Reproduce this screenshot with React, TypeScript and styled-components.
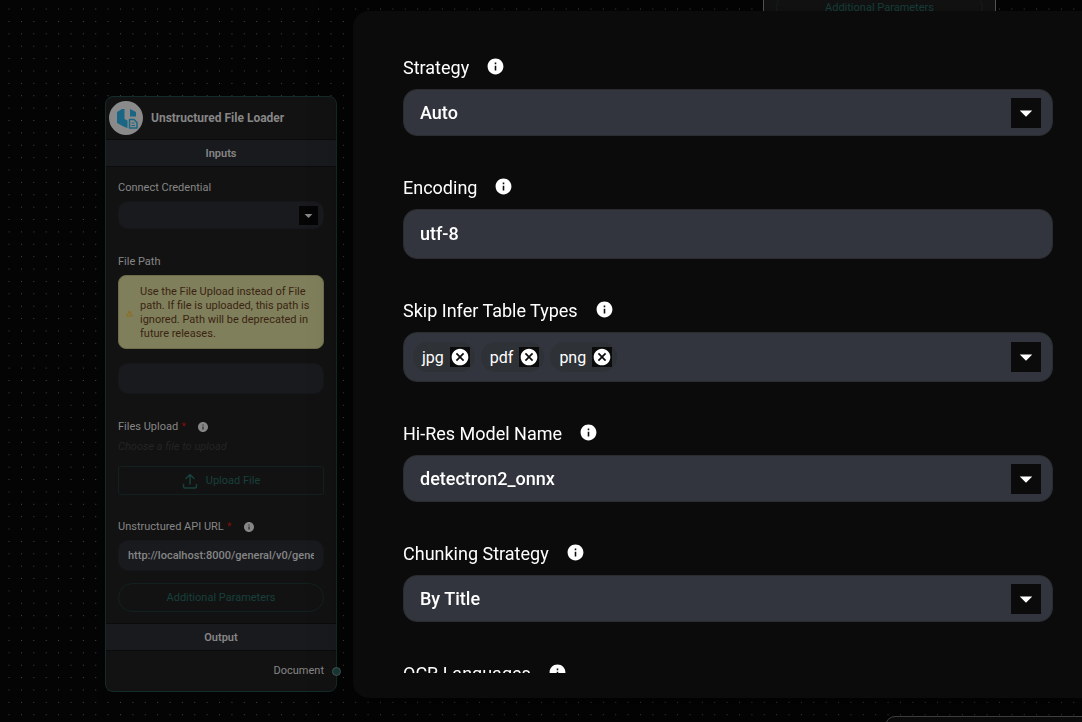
import React from 'react';
import styled, { createGlobalStyle } from 'styled-components';

const Global = createGlobalStyle`
  * { box-sizing: border-box; }
  html, body, #root { height: 100%; }
  body {
    margin: 0;
    background: #040404;
    font-family: Roboto, "Liberation Sans", sans-serif;
    overflow: hidden;
  }
  button, input, select { font-family: inherit; margin: 0; }
`;

const Canvas = styled.main`
  position: relative;
  min-height: 100vh;
  overflow: hidden;
`;

const DotGrid = styled.svg`
  position: absolute;
  inset: 0;
  width: 100%;
  height: 100%;
`;

const Node = styled.article<{ $x: number; $y: number; $idle?: boolean }>`
  position: absolute;
  left: ${p => p.$x}px;
  top: ${p => p.$y}px;
  width: ${p => (p.$idle ? 233 : 232)}px;
  background: #121212;
  border: 1px solid ${p => (p.$idle ? '#565656' : '#132b29')};
  border-radius: 8px;
  color: #868686;
  font-size: 11px;
  line-height: 14px;
`;

const NodeHeader = styled.header`
  display: flex;
  align-items: center;
  gap: 8px;
  height: 42px;
  padding: 0 3px;
`;

const NodeTitle = styled.h2`
  margin: 0;
  font-size: 12px;
  line-height: 16px;
  font-weight: 700;
`;

const SectionBar = styled.h3`
  margin: 0;
  height: 28px;
  border: solid #0b0b0b;
  border-width: 1px 0;
  background: #191a1e;
  font-size: 11px;
  line-height: 27px;
  font-weight: 600;
  text-align: center;
`;

const NodeBody = styled.div`
  display: flex;
  flex-direction: column;
  padding: 14px 12px 11px;
`;

const NodeLabel = styled.label`
  display: flex;
  align-items: center;
  height: 14px;
  margin-bottom: 6px;
  svg { margin-left: 11px; }
`;

const Required = styled.span`
  margin-left: 3px;
  color: #7c0d0d;
`;

const SmallField = styled.div`
  display: grid;
  align-items: center;
  height: 28px;
  > * { grid-area: 1 / 1; }
`;

const SmallSelect = styled.select`
  appearance: none;
  width: 100%;
  height: 28px;
  border: 1px solid #16171a;
  border-radius: 10px;
  background: #191a1e;
  color: #868686;
`;

const SmallInput = styled.input`
  display: block;
  width: 100%;
  height: 31px;
  padding: 0 9px;
  border: 1px solid #16171a;
  border-radius: 10px;
  background: #191a1e;
  color: #868686;
  font-size: 11px;
  font-weight: 500;
`;

const Arrow = styled.span<{ $small?: boolean }>`
  display: flex;
  align-items: center;
  justify-content: center;
  justify-self: end;
  flex: none;
  width: ${p => (p.$small ? 19 : 30)}px;
  height: ${p => (p.$small ? 19 : 30)}px;
  margin-right: ${p => (p.$small ? 6 : 12)}px;
  background: ${p => (p.$small ? '#050505' : '#0b0b0b')};
  color: ${p => (p.$small ? '#868686' : '#fff')};
  pointer-events: none;
`;

const Group = styled.div<{ $gap: number }>`
  margin-bottom: ${p => p.$gap}px;
`;

const Warning = styled.p`
  display: flex;
  align-items: center;
  gap: 7px;
  margin: 0 0 14px;
  padding: 9px 12px 7px 7px;
  border: 1px solid #6c6c4a;
  border-radius: 8px;
  background: #7f7f5b;
  color: #3b2412;
  svg { flex: none; }
`;

const Hint = styled.p`
  margin: 0 0 12px;
  color: #242424;
  font-style: italic;
`;

const OutlineButton = styled.button<{ $pill?: boolean }>`
  display: flex;
  align-items: center;
  justify-content: center;
  gap: 8px;
  width: 100%;
  height: 29px;
  padding: 0;
  border: 1px solid #122120;
  border-radius: ${p => (p.$pill ? 15 : 3)}px;
  background: transparent;
  color: #17403b;
  font-size: 11px;
`;

const Output = styled.footer`
  display: flex;
  align-items: center;
  justify-content: flex-end;
  height: 40px;
  padding-right: 12px;
`;

const Handle = styled.span`
  position: absolute;
  right: -5px;
  bottom: 15px;
  width: 9px;
  height: 9px;
  border: 1px solid #4a5553;
  border-radius: 50%;
  background: #173a36;
`;

const ChatPanel = styled.div`
  position: absolute;
  left: 885px;
  right: -20px;
  top: 716px;
  height: 60px;
  padding: 4px 12px;
  border: 1px solid #484848;
  border-radius: 10px;
  background: #0c0c0c;
  color: #777;
`;

const Overlay = styled.div`
  position: fixed;
  inset: 0;
  display: flex;
  padding: 11px 0 24px 353px;
`;

const Dialog = styled.section`
  flex: 1;
  min-width: 0;
  padding: 45px 29px 25px 50px;
  border-radius: 16px 0 0 16px;
  background: #0b0b0b;
  color: #fff;
  box-shadow: 0 11px 15px -7px rgba(0, 0, 0, 0.2), 0 24px 38px 3px rgba(0, 0, 0, 0.14),
    0 9px 46px 8px rgba(0, 0, 0, 0.12);
`;

const Form = styled.form`
  display: flex;
  flex-direction: column;
  gap: 40px;
  height: 100%;
  overflow: hidden;
`;

const FieldGroup = styled.div`
  flex: none;
`;

const LabelRow = styled.div`
  display: flex;
  align-items: center;
  gap: 17px;
  height: 24px;
  margin-bottom: 9px;
  font-size: 18px;
  line-height: 24px;
  svg { margin-bottom: 4px; }
`;

const SelectShell = styled.div`
  display: grid;
  align-items: center;
  > * { grid-area: 1 / 1; }
`;

const Select = styled.select`
  appearance: none;
  width: 100%;
  height: 47px;
  padding: 0 56px 0 16px;
  border: 1px solid #2b2c30;
  border-radius: 14px;
  background: #32353d;
  color: #fff;
  font-size: 18px;
  font-weight: 500;
`;

const TextInput = styled.input`
  display: block;
  width: 100%;
  height: 50px;
  padding: 0 16px 2px;
  border: 1px solid #2b2c30;
  border-radius: 14px;
  background: #32353d;
  color: #fff;
  font-size: 18px;
  font-weight: 500;
`;

const TagBox = styled.div`
  display: flex;
  align-items: center;
  gap: 6px;
  height: 50px;
  padding-left: 9px;
  border: 1px solid #2b2c30;
  border-radius: 14px;
  background: #32353d;
`;

const Tag = styled.span`
  display: flex;
  align-items: center;
  gap: 6px;
  height: 30px;
  padding: 0 5px 0 9px;
  border-radius: 15px;
  background: #2e3136;
  font-size: 16px;
`;

const TagRemove = styled.button`
  display: flex;
  align-items: center;
  justify-content: center;
  width: 20px;
  height: 20px;
  padding: 0;
  border: 0;
  background: #0b0b0b;
  color: #fff;
`;

const OpenButton = styled.button`
  display: flex;
  align-items: center;
  justify-content: center;
  width: 30px;
  height: 30px;
  margin: 0 11px 0 auto;
  padding: 0;
  border: 0;
  background: #0b0b0b;
  color: #fff;
`;

const InfoIcon = ({ size = 19 }: { size?: number }) => (
  <svg width={size} height={size} viewBox="0 0 24 24" fill="currentColor" aria-hidden="true">
    <path d="M12 2C6.480 2 2 6.480 2 12s4.480 10 10 10 10-4.480 10-10S17.520 2 12 2zm1 15h-2v-6h2v6zm0-8h-2V7h2v2z" />
  </svg>
);

const Caret = ({ small }: { small?: boolean }) => (
  <svg width={small ? 19 : 30} height={small ? 19 : 30} viewBox="0 0 24 24" fill="currentColor" aria-hidden="true">
    <path d="m7 10 5 5 5-5z" />
  </svg>
);

const CloseIcon = () => (
  <svg width="20" height="20" viewBox="0 0 24 24" fill="currentColor" aria-hidden="true">
    <path d="M12 2C6.47 2 2 6.47 2 12s4.47 10 10 10 10-4.47 10-10S17.53 2 12 2zm5 13.59L15.59 17 12 13.41 8.41 17 7 15.59 10.59 12 7 8.41 8.41 7 12 10.59 15.59 7 17 8.41 13.41 12 17 15.59z" />
  </svg>
);

const LoaderLogo = () => (
  <svg width="34" height="34" viewBox="0 0 34 34" aria-hidden="true">
    <circle cx="17" cy="17" r="17" fill="#8a8a8a" />
    <path d="M8 11l5-3h2.500v10l3 1.500V27l-3-1-7.500-4z" fill="#1a6785" />
    <path d="M21 8l6 3v4.500h-6z" fill="#1a6785" />
    <path d="M20.500 18.500h4.500l3 3V27h-7.500z" fill="#8a8a8a" stroke="#1a6785" strokeWidth="1.500" strokeLinejoin="round" />
    <path d="M22.500 22h3M22.500 24.500h3.500" stroke="#1a6785" />
  </svg>
);

const UploadIcon = () => (
  <svg width="16" height="16" viewBox="0 0 16 16" fill="none" stroke="currentColor" strokeWidth="1.500" strokeLinecap="round" strokeLinejoin="round" aria-hidden="true">
    <path d="M1.500 11.500v2a1.500 1.500 0 0 0 1.500 1.500h10a1.500 1.500 0 0 0 1.500-1.500v-2M8 11V1.500M4 5.500l4-4 4 4" />
  </svg>
);

const WarningIcon = () => (
  <svg width="7" height="7" viewBox="0 0 24 24" fill="none" stroke="#93691c" strokeWidth="3" strokeLinejoin="round" aria-hidden="true">
    <path d="M12 3 22 21H2zM12 9v6M12 17v2" />
  </svg>
);

const SelectField = ({ id, label, value }: { id: string; label: string; value: string }) => (
  <FieldGroup>
    <LabelRow><label htmlFor={id}>{label}</label><InfoIcon /></LabelRow>
    <SelectShell>
      <Select id={id} defaultValue={value}><option>{value}</option></Select>
      <Arrow><Caret /></Arrow>
    </SelectShell>
  </FieldGroup>
);

const tags = ['jpg', 'pdf', 'png'];

export default function App() {
  return (
    <Canvas>
      <Global />
      <DotGrid aria-hidden="true">
        <defs>
          <pattern id="dots" x="8.600" y="8.600" width="12.380" height="12.380" patternUnits="userSpaceOnUse">
            <circle cx="0.500" cy="0.500" r="0.500" fill="#5c5c5c" />
          </pattern>
        </defs>
        <rect width="100%" height="100%" fill="url(#dots)" />
      </DotGrid>

      <Node $x={105} $y={96}>
        <NodeHeader><LoaderLogo /><NodeTitle>Unstructured File Loader</NodeTitle></NodeHeader>
        <SectionBar>Inputs</SectionBar>
        <NodeBody>
          <Group $gap={26}>
            <NodeLabel htmlFor="credential">Connect Credential</NodeLabel>
            <SmallField>
              <SmallSelect id="credential" />
              <Arrow $small><Caret small /></Arrow>
            </SmallField>
          </Group>
          <Group $gap={26}>
            <NodeLabel htmlFor="path">File Path</NodeLabel>
            <Warning><WarningIcon /><span>Use the File Upload instead of File path. If file is uploaded, this path is ignored. Path will be deprecated in future releases.</span></Warning>
            <SmallInput id="path" type="text" />
          </Group>
          <Group $gap={25}>
            <NodeLabel as="div">Files Upload<Required>*</Required><InfoIcon size={12} /></NodeLabel>
            <Hint>Choose a file to upload</Hint>
            <OutlineButton type="button"><UploadIcon />Upload File</OutlineButton>
          </Group>
          <Group $gap={12}>
            <NodeLabel htmlFor="api">Unstructured API URL<Required>*</Required><InfoIcon size={12} /></NodeLabel>
            <SmallInput id="api" type="text" defaultValue="http://localhost:8000/general/v0/general" />
          </Group>
          <OutlineButton type="button" $pill>Additional Parameters</OutlineButton>
        </NodeBody>
        <SectionBar>Output</SectionBar>
        <Output>Document</Output>
        <Handle />
      </Node>

      <Node $x={763} $y={-62} $idle>
        <NodeBody>
          <Group $gap={40} />
          <OutlineButton type="button" $pill>Additional Parameters</OutlineButton>
        </NodeBody>
      </Node>

      <ChatPanel><InfoIcon size={18} /></ChatPanel>

      <Overlay>
        <Dialog role="dialog" aria-label="Additional Parameters">
          <Form>
            <SelectField id="strategy" label="Strategy" value="Auto" />
            <FieldGroup>
              <LabelRow><label htmlFor="encoding">Encoding</label><InfoIcon /></LabelRow>
              <TextInput id="encoding" type="text" defaultValue="utf-8" />
            </FieldGroup>
            <FieldGroup>
              <LabelRow><span id="skip">Skip Infer Table Types</span><InfoIcon /></LabelRow>
              <TagBox role="group" aria-labelledby="skip">
                {tags.map(tag => (
                  <Tag key={tag}>{tag}<TagRemove type="button" aria-label={`Remove ${tag}`}><CloseIcon /></TagRemove></Tag>
                ))}
                <OpenButton type="button" aria-label="Open"><Caret /></OpenButton>
              </TagBox>
            </FieldGroup>
            <SelectField id="model" label="Hi-Res Model Name" value="detectron2_onnx" />
            <SelectField id="chunking" label="Chunking Strategy" value="By Title" />
            <SelectField id="ocr" label="OCR Languages" value="English" />
          </Form>
        </Dialog>
      </Overlay>
    </Canvas>
  );
}
